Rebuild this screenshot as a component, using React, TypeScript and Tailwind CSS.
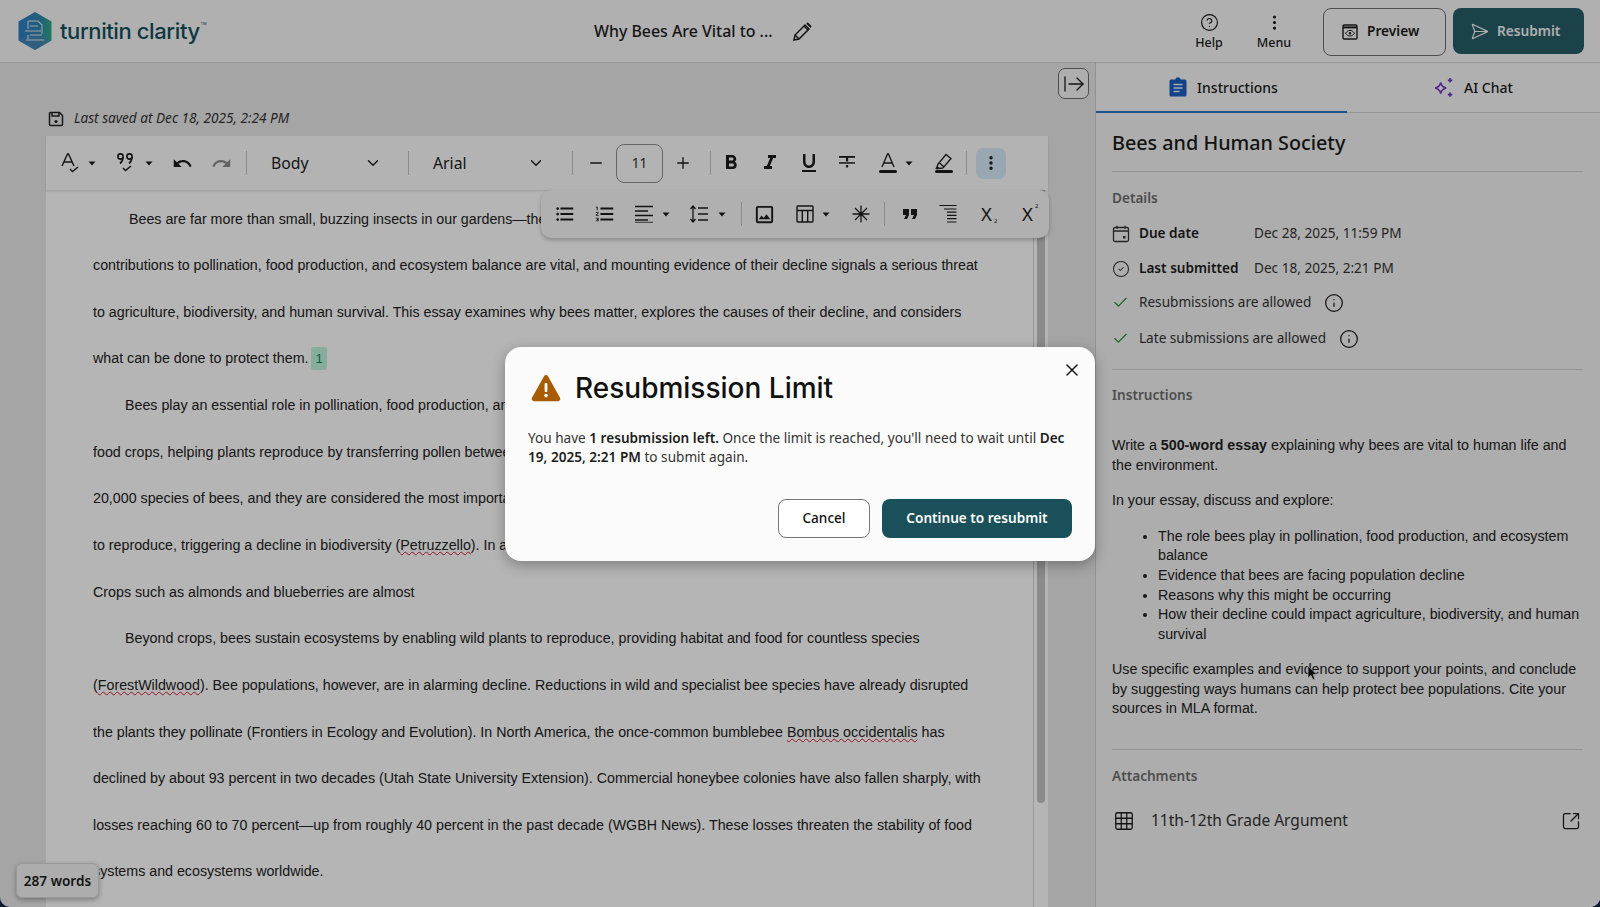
import React from "react";
import { ArrowRightFromLine, Check, ChevronDown, CircleCheck, CircleHelp, EllipsisVertical, Grid3x3, Info, Minus, Plus, SendHorizontal, SquareArrowOutUpRight, X } from "lucide-react";
import { MdFormatBold, MdFormatItalic, MdFormatListBulleted, MdFormatListNumbered, MdFormatQuote, MdFormatUnderlined, MdOutlineImage, MdRedo, MdUndo } from "react-icons/md";

const Caret = ({ className = "" }: { className?: string }) => (
  <svg width="8" height="5" viewBox="0 0 8 5" className={className}><path d="M0.5 0.5h7L4 4.5z" fill="#1c1c1c" /></svg>
);
const Sep = ({ className = "" }: { className?: string }) => <div className={`w-px h-[24px] bg-[#c4c4c4] ${className}`} />;

const Sub = ({ sup }: { sup?: boolean }) => (
  <span className="font-['Noto_Sans',sans-serif] text-[18.5px] leading-none text-[#1c1c1c] relative flex items-center w-[17px]">
    X<span className={`text-[6px] absolute left-[13px] ${sup ? "top-[-2px]" : "bottom-[-1px]"}`}>2</span>
  </span>
);

const Logo = () => (
  <svg width="36" height="40" viewBox="0 0 36 40" className="shrink-0">
    <defs>
      <linearGradient id="lg" x1="0" y1="0" x2="1" y2="0">
        <stop offset="0" stopColor="#2f7fc4" />
        <stop offset="0.65" stopColor="#2f86b0" />
        <stop offset="1" stopColor="#2fae84" />
      </linearGradient>
    </defs>
    <path d="M18 1l16.5 9.5v19L18 39 1.5 29.5v-19z" fill="url(#lg)" />
    <path d="M18 39L1.5 29.5 18 22l16.5 7.5z" fill="#5b87b4" opacity=".45" />
    <path d="M11 10h10l4 4v9M11 10v8M11 28v-4M13 15h8M8 20h16M13 24h12M9 29h18" stroke="#dbe9ee" strokeWidth="1.1" fill="none" />
  </svg>
);

const essay: React.ReactNode[] = [
  <span className="pl-[36px]">Bees are far more than small, buzzing insects in our gardens—they are essential partners in human life. Their</span>,
  "contributions to pollination, food production, and ecosystem balance are vital, and mounting evidence of their decline signals a serious threat",
  "to agriculture, biodiversity, and human survival. This essay examines why bees matter, explores the causes of their decline, and considers",
  <>what can be done to protect them. <span className="inline-block bg-[#bdf2dc] text-[#0b8a60] rounded-[3px] px-[4px] text-[13px] leading-[23px] ml-[-1px]">1</span></>,
  <span className="pl-[32px]">Bees play an essential role in pollination, food production, and ecosystem stability.</span>,
  "food crops, helping plants reproduce by transferring pollen between flowers.",
  "20,000 species of bees, and they are considered the most important pollinators.",
  <>to reproduce, triggering a decline in biodiversity (<span className="underline decoration-wavy decoration-[#d01f35] decoration-1">Petruzzello</span>). In addition,</>,
  "Crops such as almonds and blueberries are almost",
  <span className="pl-[32px]">Beyond crops, bees sustain ecosystems by enabling wild plants to reproduce, providing habitat and food for countless species</span>,
  <>(<span className="underline decoration-wavy decoration-[#d01f35] decoration-1">ForestWildwood</span>). Bee populations, however, are in alarming decline. Reductions in wild and specialist bee species have already disrupted</>,
  <>the plants they pollinate (Frontiers in Ecology and Evolution). In North America, the once-common bumblebee <span className="underline decoration-wavy decoration-[#d01f35] decoration-1">Bombus occidentalis</span> has</>,
  "declined by about 93 percent in two decades (Utah State University Extension). Commercial honeybee colonies have also fallen sharply, with",
  "losses reaching 60 to 70 percent—up from roughly 40 percent in the past decade (WGBH News). These losses threaten the stability of food",
  "systems and ecosystems worldwide.",
];

export default function App() {
  return (
    <div className="h-[907px] w-[1600px] bg-[#0e1a2b] overflow-hidden">
      <div className="relative h-[907px] w-[1600px] overflow-hidden rounded-b-[10px] bg-[#e9e9e9] flex flex-col font-['Noto_Sans',sans-serif] text-[#1c1c1c]">
        {/* header */}
        <header className="h-[63px] shrink-0 bg-[#f8f8f8] border-b border-[#d4d4d4] flex items-center">
          <div className="w-[594px] pl-[17px] flex items-center gap-[7px] shrink-0">
            <Logo />
            <span className="font-['Inter',sans-serif] font-medium text-[22px] text-[#14505e] tracking-[-0.4px] leading-none mt-[-1px]">turnitin clarity</span>
            <span className="text-[4px] text-[#14505e] mb-[14px] ml-[-6px] leading-none">TM</span>
          </div>
          <span className="text-[15.9px] font-medium pt-[1px]">Why Bees Are Vital to ...</span>
          <svg width="20" height="20" viewBox="0 0 20 20" className="ml-[19px] mt-[1px]" fill="none" stroke="#1c1c1c" strokeWidth="1.5"><path d="M2 18l1-5L13 3l4 4L7 17z" /><path d="M12 4l4 4M3 13l4 4" /><path d="M15 1l4 4" strokeWidth="2" /></svg>
          <div className="ml-auto flex items-center pr-[16px]">
            <div className="flex flex-col items-center w-[40px]">
              <CircleHelp size={19} strokeWidth={1.5} />
              <span className="text-[12.5px] font-medium leading-none mt-[5px]">Help</span>
            </div>
            <div className="flex flex-col items-center w-[50px] ml-[20px]">
              <EllipsisVertical size={19} strokeWidth={2} />
              <span className="text-[12.5px] font-medium leading-none mt-[5px]">Menu</span>
            </div>
            <button className="ml-[24px] w-[123px] h-[48px] rounded-[8px] border border-[#6f6f6f] flex items-center pl-[18px] gap-[9px] text-[13.7px] font-semibold mt-[1px]">
              <svg width="16" height="16" viewBox="0 0 16 16" fill="none" stroke="#1c1c1c"><rect x="1" y="1" width="14" height="14" rx="1.2" strokeWidth="1.4" /><path d="M1 3.4h14" strokeWidth="2" /><path d="M3.5 9.2C5 7.2 6.4 6.4 8 6.4s3 .8 4.5 2.8C11 11.2 9.6 12 8 12s-3-.8-4.5-2.8z" strokeWidth="1" /><circle cx="8" cy="9.2" r="1.2" fill="#1c1c1c" stroke="none" /></svg>
              Preview
            </button>
            <button className="ml-[7px] w-[131px] h-[46px] rounded-[8px] bg-[#265c68] text-[#f6f6f6] flex items-center pl-[17px] gap-[8px] text-[13.7px] font-semibold">
              <SendHorizontal size={19} strokeWidth={1.5} />
              Resubmit
            </button>
          </div>
        </header>

        <div className="flex flex-1 min-h-0">
          {/* editor column */}
          <main className="relative w-[1095px] shrink-0 pl-[46px] pr-[47px] flex flex-col min-h-0">
            <div className="h-[73px] shrink-0 flex items-center gap-[10px] pt-[38px] pl-[2px] text-[13.6px] italic text-[#333]">
              <svg width="16" height="16" viewBox="0 0 16 16" fill="none" stroke="#222" strokeWidth="1.5"><path d="M2.5 1.5h9l3 3v9a1 1 0 0 1-1 1h-11a1 1 0 0 1-1-1v-11a1 1 0 0 1 1-1z" /><path d="M4 2v3h7V2" /><circle cx="8" cy="10.5" r="1.6" fill="#222" stroke="none" /></svg>
              Last saved at Dec 18, 2025, 2:24 PM
            </div>

            <div className="h-[54px] shrink-0 bg-[#fcfcfc] flex items-center shadow-[0_1px_2px_rgba(0,0,0,0.15)] relative z-10">
              <svg width="20" height="22" viewBox="0 0 20 22" className="ml-[15px]" fill="none" stroke="#1c1c1c" strokeWidth="1.4"><path d="M1 14L6.5 2h1L13 14M3 10h8" /><path d="M9 17l2.5 2.5L17 15" /></svg>
              <Caret className="ml-[7px]" />
              <svg width="20" height="22" viewBox="0 0 20 22" className="ml-[20px]" fill="none" stroke="#1c1c1c" strokeWidth="1.6"><circle cx="4.5" cy="4.5" r="2.6" /><path d="M7 5c0 3-1 5-3 6.5" /><circle cx="13.5" cy="4.5" r="2.6" /><path d="M16 5c0 3-1 5-3 6.5" /><path d="M7 16l2.5 2.5L15 14" /></svg>
              <Caret className="ml-[9px]" />
              <MdUndo size={21} className="ml-[19px]" />
              <MdRedo size={21} className="ml-[18px] text-[#8a8a8a]" />
              <Sep className="ml-[14px]" />
              <span className="text-[15.8px] ml-[24px] w-[93px] pt-[1px]">Body</span>
              <ChevronDown size={18} strokeWidth={1.8} />
              <Sep className="ml-[26px]" />
              <span className="text-[15.8px] ml-[24px] w-[94px] pt-[1px]">Arial</span>
              <ChevronDown size={18} strokeWidth={1.8} />
              <Sep className="ml-[27px]" />
              <Minus size={18} strokeWidth={1.8} className="ml-[14px]" />
              <div className="ml-[11px] w-[47px] h-[39px] border border-[#909090] rounded-[8px] flex items-center justify-center text-[13.5px] text-[#333]">11</div>
              <Plus size={18} strokeWidth={1.8} className="ml-[11px]" />
              <Sep className="ml-[18px]" />
              <MdFormatBold size={24} className="ml-[8px]" />
              <MdFormatItalic size={24} className="ml-[15px]" />
              <MdFormatUnderlined size={24} className="ml-[15px]" />
              <svg width="18" height="18" viewBox="0 0 18 18" className="ml-[17px]" fill="#1c1c1c"><rect x="1" y="2" width="16" height="1.8" /><rect x="1" y="8.2" width="16" height="1.5" /><rect x="8" y="3" width="2.2" height="4.4" /><rect x="7.8" y="11" width="2.5" height="2.5" rx="1" /></svg>
              <svg width="20" height="22" viewBox="0 0 20 22" className="ml-[22px]" fill="none" stroke="#1c1c1c" strokeWidth="1.3"><path d="M4 15L9.5 2h1L16 15M6 11h8" /><rect x="1" y="18" width="18" height="3" rx="1.5" fill="#1c1c1c" stroke="none" /></svg>
              <Caret className="ml-[7px]" />
              <svg width="20" height="22" viewBox="0 0 20 22" className="ml-[21px]" fill="none" stroke="#1c1c1c" strokeWidth="1.3"><path d="M3 15l1-3L12 2.5l5 4-8 9.5-3 .5zM5 10.5l5 4.5M3 15l-.8 1.5 2.3.3" /><rect x="1" y="18" width="18" height="3" rx="1.5" fill="#1c1c1c" stroke="none" /></svg>
              <Sep className="ml-[12px]" />
              <div className="ml-[9px] w-[30px] h-[31px] rounded-[7px] bg-[#d7ecfb] flex items-center justify-center"><EllipsisVertical size={18} strokeWidth={2.6} /></div>
            </div>

            {/* floating toolbar */}
            <div className="absolute left-[541px] top-[127px] w-[508px] h-[48px] rounded-[10px] bg-[#f8f8f8] shadow-[0_2px_4px_rgba(0,0,0,0.25)] flex items-center z-20">
              <MdFormatListBulleted size={22} className="ml-[13px]" />
              <MdFormatListNumbered size={22} className="ml-[18px]" />
              <svg width="20" height="18" viewBox="0 0 20 18" className="ml-[18px]" stroke="#1c1c1c" strokeWidth="1.3"><path d="M1 1.5h18M1 6h13M1 10.5h18M1 15h13" /><path d="M1 17.3h18" strokeWidth="0.8" /></svg>
              <Caret className="ml-[8px]" />
              <svg width="20" height="20" viewBox="0 0 20 20" className="ml-[19px]" fill="none" stroke="#1c1c1c" strokeWidth="1.3"><path d="M4 3v14M1.5 5L4 2l2.5 3M1.5 15L4 18l2.5-3" /><path d="M9 4h10M9 10h10M9 16h10" /></svg>
              <Caret className="ml-[9px]" />
              <Sep className="ml-[15px] h-[24px]" />
              <MdOutlineImage size={23} className="ml-[11px]" />
              <svg width="18" height="18" viewBox="0 0 18 18" className="ml-[20px]" fill="none" stroke="#1c1c1c" strokeWidth="1.4"><rect x="1" y="1" width="16" height="16" rx="1" /><path d="M1 5.5h16M6.3 5.5V17M11.7 5.5V17" /></svg>
              <Caret className="ml-[8px]" />
              <svg width="18" height="18" viewBox="0 0 18 18" className="ml-[22px]" stroke="#1c1c1c" strokeWidth="1.3"><path d="M9 0.5v17M0.5 9h17M3 3l12 12M15 3L3 15" /></svg>
              <Sep className="ml-[14px]" />
              <MdFormatQuote size={24} className="ml-[13px]" />
              <svg width="18" height="20" viewBox="0 0 18 20" className="ml-[17px]" stroke="#1c1c1c" strokeWidth="1.2"><path d="M0.5 1.5h17M5 5h12.5M8 8.2h9.5M8 11.4h9.5M8 14.6h9.5M8 18h9.5" /></svg>
              <span className="ml-[24px]"><Sub /></span>
              <span className="ml-[24px]"><Sub sup /></span>
            </div>

            {/* page with scrollbar */}
            <div className="flex-1 min-h-0 flex">
              <div className="w-[988px] bg-white pl-[47px] pt-[5.5px] overflow-hidden border-r border-[#d6d6d6] font-['Liberation_Sans',Arial,sans-serif] text-[14.25px] leading-[46.65px] text-[#222]">
                {essay.map((l, i) => (
                  <div key={i} className="whitespace-nowrap h-[46.65px]">{l}</div>
                ))}
              </div>
              <div className="w-[14px] bg-white flex justify-center">
                <div className="w-[8px] h-[613px] bg-[#c4c4c4] rounded-b-[4px]" />
              </div>
            </div>

            <button className="absolute left-[1058px] top-[5px] w-[31px] h-[31px] rounded-[7px] border border-[#6f6f6f] bg-[#f6f6f6] flex items-center justify-center">
              <ArrowRightFromLine size={24} strokeWidth={1.3} />
            </button>

            <div className="absolute left-[16px] top-[800px] w-[83px] h-[35px] rounded-[6px] border border-[#d8d8d8] bg-[#f4f4f4] shadow-[0_2px_5px_rgba(0,0,0,0.3)] flex items-center justify-center text-[13.6px] font-semibold z-10 pt-[1px]">287 words</div>
          </main>

          {/* right panel */}
          <aside className="w-[505px] shrink-0 bg-[#f4f4f4] border-l border-[#d0d0d0] flex flex-col min-h-0">
            <div className="h-[50px] shrink-0 flex border-b border-[#d4d4d4] bg-[#f8f8f8]">
              <div className="w-[251px] h-[50px] border-b-2 border-[#2a74c9] flex items-center justify-center gap-[10px] text-[14px] font-medium pl-[4px]">
                <svg width="18" height="20" viewBox="0 0 18 20"><path d="M2 2.5h4.2a2.9 2.9 0 0 1 5.6 0H16a1.5 1.5 0 0 1 1.5 1.5v14a1.5 1.5 0 0 1-1.5 1.5H2A1.5 1.5 0 0 1 .5 18V4A1.5 1.5 0 0 1 2 2.5z" fill="#1a5ec0" /><path d="M4.5 7.5h9M4.5 11h9M4.5 14.5h6" stroke="#e8f0fb" strokeWidth="1.5" /></svg>
                Instructions
              </div>
              <div className="flex-1 flex items-center justify-center gap-[9px] text-[14px] font-medium pr-[1px]">
                <svg width="22" height="22" viewBox="0 0 20 20" fill="none" stroke="#6a34c9" strokeWidth="1.3"><path d="M7 5c.6 3 1.7 4.2 5 5-3.3.8-4.4 2-5 5-.6-3-1.7-4.2-5-5 3.3-.8 4.4-2 5-5z" /><path d="M15.5 1v4M13.5 3h4M15.5 14v4M13.5 16h4" strokeWidth="1.5" /></svg>
                AI Chat
              </div>
            </div>
            <div className="pl-[16px] pr-[17px] flex-1 min-h-0 flex flex-col">
              <h1 className="text-[19.75px] font-medium leading-[27px] pt-[16px] h-[59px] border-b border-[#cfcfcf] text-[#1a1a1a]">Bees and Human Society</h1>
              <h2 className="text-[13.6px] font-semibold text-[#6f6f6f] leading-[19px] mt-[16px]">Details</h2>
              <div className="mt-[17px] text-[13.6px] text-[#333] flex items-center h-[19px]">
                <svg width="18" height="18" viewBox="0 0 18 18" className="mr-[9px] shrink-0" fill="none" stroke="#333" strokeWidth="1.3"><rect x="1.5" y="2.5" width="15" height="14" rx="1.5" /><path d="M1.5 6h15M5 .8v3M13 .8v3" /><rect x="11" y="11" width="2.5" height="2.5" fill="#333" stroke="none" /></svg>
                <b className="font-semibold w-[115px] text-[#1c1c1c]">Due date</b>Dec 28, 2025, 11:59 PM
              </div>
              <div className="mt-[16px] text-[13.6px] text-[#333] flex items-center h-[19px]">
                <CircleCheck size={18} strokeWidth={1.4} className="mr-[9px] shrink-0" />
                <b className="font-semibold w-[115px] text-[#1c1c1c]">Last submitted</b>Dec 18, 2025, 2:21 PM
              </div>
              <div className="mt-[15px] text-[13.6px] text-[#333] flex items-center h-[19px]">
                <Check size={17} strokeWidth={1.6} className="mr-[10px] text-[#1a8a30] shrink-0" />
                Resubmissions are allowed
                <Info size={20} strokeWidth={1.5} className="ml-[13px] text-[#1c1c1c]" />
              </div>
              <div className="mt-[17px] text-[13.6px] text-[#333] flex items-center h-[19px]">
                <Check size={17} strokeWidth={1.6} className="mr-[10px] text-[#1a8a30] shrink-0" />
                Late submissions are allowed
                <Info size={20} strokeWidth={1.5} className="ml-[13px] text-[#1c1c1c]" />
              </div>
              <div className="mt-[21px] h-px bg-[#cfcfcf]" />
              <h2 className="text-[13.6px] font-semibold text-[#6f6f6f] leading-[19px] mt-[15px]">Instructions</h2>
              <div className="relative mt-[32px] font-['Liberation_Sans',Arial,sans-serif] text-[14.25px] leading-[19.7px] text-[#222]">
                <p>Write a <b>500-word essay</b> explaining why bees are vital to human life and the environment.</p>
                <p className="mt-[15.5px]">In your essay, discuss and explore:</p>
                <ul className="list-disc pl-[46px] mt-[16px]">
                  <li>The role bees play in pollination, food production, and ecosystem balance</li>
                  <li>Evidence that bees are facing population decline</li>
                  <li>Reasons why this might be occurring</li>
                  <li>How their decline could impact agriculture, biodiversity, and human survival</li>
                </ul>
                <p className="mt-[15px]">Use specific examples and evidence to support your points, and conclude by suggesting ways humans can help protect bee populations. Cite your sources in MLA format.</p>
                <svg width="11" height="16" viewBox="0 0 11 16" className="absolute left-[195px] top-[229px]"><path d="M1 1v12l3-2.6 2 4.4 2-.9-2-4.3h4z" fill="#111" stroke="#eee" strokeWidth=".7" /></svg>
              </div>
              <div className="mt-[30px] h-px bg-[#cfcfcf]" />
              <h2 className="text-[13.6px] font-semibold text-[#6f6f6f] leading-[19px] mt-[16px]">Attachments</h2>
              <div className="mt-[25px] flex items-center text-[15.5px] text-[#333] h-[22px]">
                <Grid3x3 size={22} strokeWidth={1.4} className="text-[#1c1c1c] ml-[1px]" />
                <span className="ml-[16px]">11th-12th Grade Argument</span>
                <SquareArrowOutUpRight size={20} strokeWidth={1.5} className="ml-auto mr-[2px] text-[#1c1c1c]" />
              </div>
            </div>
          </aside>
        </div>

        {/* overlay and modal */}
        <div className="absolute inset-0 bg-black/[0.29] z-30 flex items-center justify-center">
          <div className="w-[590px] h-[214px] bg-[#fbfbfb] rounded-[16px] shadow-[0_4px_14px_rgba(0,0,0,0.3)] relative px-[24px] pt-[20px]">
            <div className="flex items-center h-[42px]">
              <svg width="30" height="28" viewBox="0 0 30 28" className="ml-[2px]">
                <path d="M13 2.2a2.3 2.3 0 0 1 4 0l12 21.5a2.3 2.3 0 0 1-2 3.5H3a2.3 2.3 0 0 1-2-3.5z" fill="#a85c00" />
                <rect x="13.6" y="9" width="2.8" height="9" rx="1" fill="#fff" /><circle cx="15" cy="21.6" r="1.8" fill="#fff" />
              </svg>
              <span className="ml-[14px] font-['Inter',sans-serif] font-medium text-[28px] leading-none text-[#111]">Resubmission Limit</span>
            </div>
            <X size={20} strokeWidth={1.7} className="absolute right-[13px] top-[13px] text-[#111]" />
            <p className="mt-[19px] text-[13.6px] leading-[19.5px] text-[#333] w-[540px] ml-[-1px]">
              You have <b className="font-semibold text-[#1c1c1c]">1 resubmission left.</b> Once the limit is reached, you'll need to wait until <b className="font-semibold text-[#1c1c1c]">Dec 19, 2025, 2:21 PM</b> to submit again.
            </p>
            <div className="absolute right-[23px] bottom-[23px] flex gap-[12px]">
              <button className="w-[92px] h-[39px] rounded-[8px] border border-[#777] bg-white text-[13.6px] font-medium text-[#111]">Cancel</button>
              <button className="w-[190px] h-[39px] rounded-[8px] bg-[#1a5059] text-white text-[13.6px] font-semibold">Continue to resubmit</button>
            </div>
          </div>
        </div>
      </div>
    </div>
  );
}
